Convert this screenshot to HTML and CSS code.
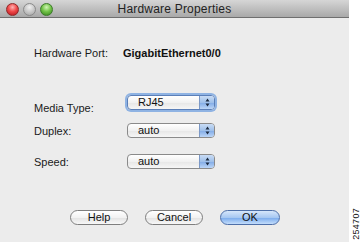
FILE: index.html
```html
<!DOCTYPE html>
<html>
<head>
<meta charset="utf-8">
<link rel="stylesheet" href="styles.css">
</head>
<body>
<div class="page">
  <div class="window">
    <div class="titlebar">
      <div class="lights">
        <span class="light red"></span>
        <span class="light gray"></span>
        <span class="light green"></span>
      </div>
      <div class="title">Hardware Properties</div>
    </div>
    <div class="content">
      <div class="row port">
        <span class="label">Hardware Port:</span>
        <span class="value">GigabitEthernet0/0</span>
      </div>
      <div class="row media">
        <span class="label low">Media Type:</span>
        <div class="popup focus"><span class="ptext">RJ45</span><span class="arrows"><svg width="5" height="9" viewBox="0 0 5 9"><path d="M2.5 0.5 L4.5 3.5 L0.5 3.5 Z M2.5 8.5 L4.5 5.5 L0.5 5.5 Z" fill="#1c2a3f"/></svg></span></div>
      </div>
      <div class="row duplex">
        <span class="label">Duplex:</span>
        <div class="popup"><span class="ptext">auto</span><span class="arrows"><svg width="5" height="9" viewBox="0 0 5 9"><path d="M2.5 0.5 L4.5 3.5 L0.5 3.5 Z M2.5 8.5 L4.5 5.5 L0.5 5.5 Z" fill="#1c2a3f"/></svg></span></div>
      </div>
      <div class="row speed">
        <span class="label">Speed:</span>
        <div class="popup"><span class="ptext">auto</span><span class="arrows"><svg width="5" height="9" viewBox="0 0 5 9"><path d="M2.5 0.5 L4.5 3.5 L0.5 3.5 Z M2.5 8.5 L4.5 5.5 L0.5 5.5 Z" fill="#1c2a3f"/></svg></span></div>
      </div>
      <div class="buttons">
        <button class="btn">Help</button>
        <button class="btn">Cancel</button>
        <button class="btn default">OK</button>
      </div>
    </div>
  </div>
  <div class="strip"><span class="fig">254707</span></div>
</div>
</body>
</html>
```
FILE: styles.css
```css
* { box-sizing: border-box; }
html, body { margin: 0; padding: 0; background: #fff; }
body { font-family: "Liberation Sans", Arial, sans-serif; font-size: 11px; color: #111; }
.page { display: flex; width: 362px; height: 242px; }
.window { width: 349px; height: 242px; background: #ececec; display: flex; flex-direction: column; }
.titlebar {
  height: 18px; position: relative;
  background: linear-gradient(#d6d6d6, #a9a9a9);
  border-bottom: 1px solid #6f6f6f;
  display: flex; align-items: center; justify-content: center;
}
.lights { position: absolute; left: 6px; top: 3px; display: flex; gap: 4px; }
.light { width: 13px; height: 13px; border-radius: 50%; display: block; }
.light.red { background: radial-gradient(circle at 50% 30%, #ffb5b5 0, #f04a4a 45%, #b0121a 100%); border: 1px solid #8d2a2a; }
.light.gray { background: radial-gradient(circle at 50% 30%, #f0f0f0 0, #c8c8c8 50%, #a0a0a0 100%); border: 1px solid #8a8a8a; }
.light.green { background: radial-gradient(circle at 50% 30%, #d2f5b5 0, #74c54a 45%, #33801a 100%); border: 1px solid #3c7a2a; }
.title { font-size: 12px; color: #222; letter-spacing: 0.2px; }
.content { flex: 1; padding: 0 0 0 34px; display: flex; flex-direction: column; }
.row { display: flex; align-items: center; }
.label { width: 93px; color: #1a1a1a; }
.label.low { align-self: flex-end; margin-bottom: -4px; }
.port { margin-top: 27px; height: 16px; }
.port .value { font-weight: bold; margin-left: -4px; }
.media { margin-top: 34px; }
.duplex { margin-top: 13px; }
.speed { margin-top: 16px; }
.popup {
  width: 88px; height: 15px; display: flex; border: 1px solid #8a8a8a; border-radius: 4px;
  background: linear-gradient(#ffffff, #f1f1f1 50%, #e6e6e6 51%, #f6f6f6);
  overflow: hidden;
}
.popup.focus { box-shadow: 0 0 0 2px #8fb3e3; border-color: #5b7fb8; }
.ptext { flex: 1; padding-left: 10px; line-height: 13px; }
.arrows {
  width: 15px; display: flex; align-items: center; justify-content: center;
  background: linear-gradient(#c9dcf5, #9fc0ea 50%, #80aae6 51%, #bcd6f7);
  border-left: 1px solid #7b98c6;
}
.buttons { display: flex; gap: 17px; margin-top: 41px; margin-left: 36px; }
.btn {
  font-family: inherit; font-size: 11px; color: #111;
  width: 58px; height: 15px; padding: 0; border: 1px solid #7e7e7e; border-radius: 8px;
  background: linear-gradient(#ffffff, #f2f2f2 50%, #e2e2e2 51%, #f8f8f8);
  line-height: 13px;
}
.btn.default { width: 60px; border-color: #4e6fa8; background: linear-gradient(#d6e6fb, #a7c8f2 50%, #78a9ec 51%, #c3ddfb); }
.strip { width: 13px; display: flex; align-items: flex-end; justify-content: center; padding-bottom: 2px; }
.fig { writing-mode: vertical-rl; transform: rotate(180deg); font-size: 9px; color: #111; letter-spacing: 0.3px; }
```
